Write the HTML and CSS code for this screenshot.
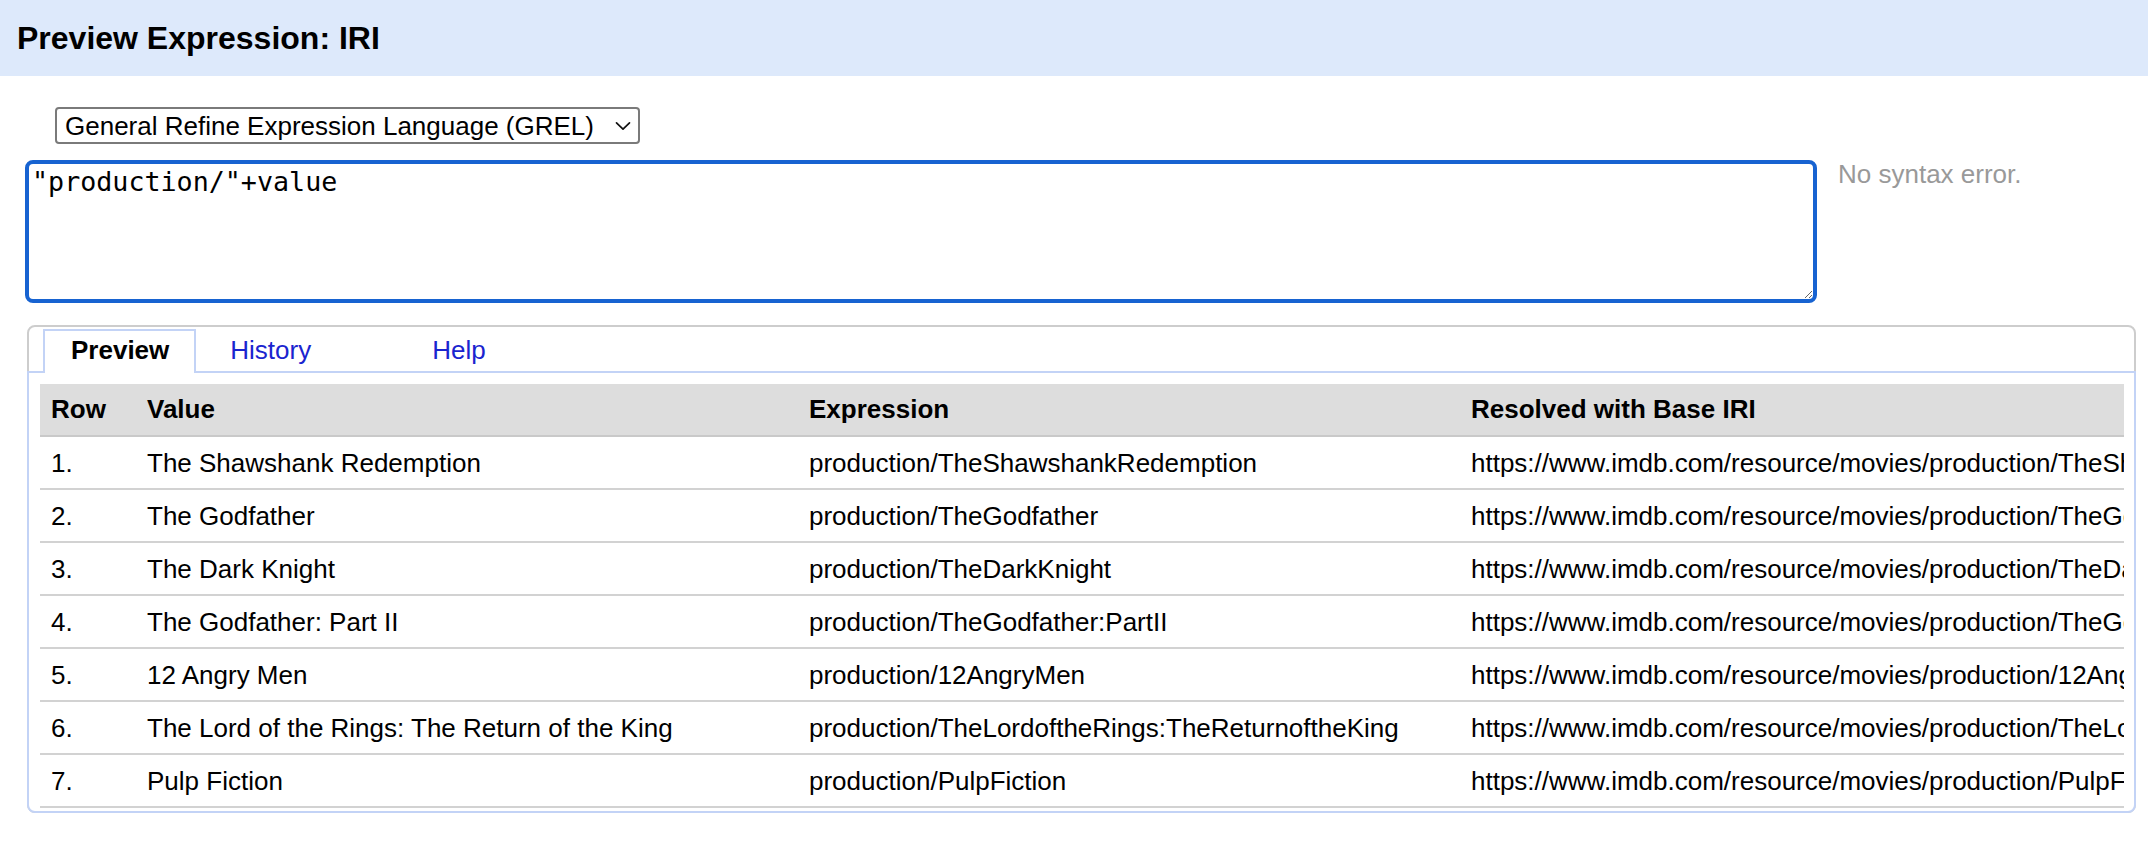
FILE: index.html
```html
<!DOCTYPE html>
<html lang="en">
<head>
<meta charset="utf-8">
<title>Preview Expression: IRI</title>
<link rel="stylesheet" href="styles.css">
</head>
<body>
<div class="dialog">
  <div class="dialog-header">
    <h1 class="dialog-title">Preview Expression: IRI</h1>
  </div>
  <div class="dialog-body">
    <div class="lang-row">
      <label class="select-box">
        <select class="lang-select">
          <option>General Refine Expression Language (GREL)</option>
        </select>
        <svg class="select-chevron" width="16" height="10" viewBox="0 0 16 10" aria-hidden="true"><path d="M1.5 1.8 L8 8.2 L14.5 1.8" fill="none" stroke="#111" stroke-width="1.7" stroke-linecap="round" stroke-linejoin="round"/></svg>
      </label>
    </div>
    <div class="expr-row">
      <textarea class="expr-input" spellcheck="false">"production/"+value</textarea>
      <div class="expr-status">No syntax error.</div>
    </div>
    <div class="tabs">
      <div class="tab-nav">
        <div class="tab tab-active">Preview</div>
        <div class="tab tab-history">History</div>
        <div class="tab tab-help">Help</div>
      </div>
      <div class="tab-panel">
        <div class="table-wrap">
          <table class="preview-table">
            <colgroup>
              <col class="col-row">
              <col class="col-value">
              <col class="col-expr">
              <col class="col-iri">
            </colgroup>
            <thead>
              <tr><th>Row</th><th>Value</th><th>Expression</th><th>Resolved with Base IRI</th></tr>
            </thead>
            <tbody>
              <tr><td>1.</td><td>The Shawshank Redemption</td><td>production/TheShawshankRedemption</td><td>https://www.imdb.com/resource/movies/production/TheShawshankRedemption</td></tr>
              <tr><td>2.</td><td>The Godfather</td><td>production/TheGodfather</td><td>https://www.imdb.com/resource/movies/production/TheGodfather</td></tr>
              <tr><td>3.</td><td>The Dark Knight</td><td>production/TheDarkKnight</td><td>https://www.imdb.com/resource/movies/production/TheDarkKnight</td></tr>
              <tr><td>4.</td><td>The Godfather: Part II</td><td>production/TheGodfather:PartII</td><td>https://www.imdb.com/resource/movies/production/TheGodfather:PartII</td></tr>
              <tr><td>5.</td><td>12 Angry Men</td><td>production/12AngryMen</td><td>https://www.imdb.com/resource/movies/production/12AngryMen</td></tr>
              <tr><td>6.</td><td>The Lord of the Rings: The Return of the King</td><td>production/TheLordoftheRings:TheReturnoftheKing</td><td>https://www.imdb.com/resource/movies/production/TheLordoftheRings:TheReturnoftheKing</td></tr>
              <tr><td>7.</td><td>Pulp Fiction</td><td>production/PulpFiction</td><td>https://www.imdb.com/resource/movies/production/PulpFiction</td></tr>
            </tbody>
          </table>
        </div>
      </div>
    </div>
  </div>
</div>
</body>
</html>
```
FILE: styles.css
```css
* { box-sizing: border-box; }

html, body {
  margin: 0;
  padding: 0;
  background: #ffffff;
}

body {
  font-family: "Liberation Sans", Arial, Helvetica, sans-serif;
  font-size: 26px;
  line-height: 30px;
  color: #000;
  width: 2148px;
  overflow: hidden;
}

.dialog-header {
  background: #dde9fb;
  height: 76px;
  padding: 20px 17px;
}

.dialog-title {
  margin: 0;
  font-size: 32px;
  line-height: 36px;
  font-weight: bold;
  color: #000;
}

.dialog-body {
  padding: 31px 12px 0 27px;
}

.lang-row {
  display: flex;
  padding-left: 28px;
}

.select-box {
  display: inline-flex;
  align-items: center;
  justify-content: space-between;
  width: 585px;
  height: 37px;
  border: 2px solid #7a7a7a;
  border-radius: 4px;
  padding: 0 7px 0 8px;
  background: #fff;
}

.lang-select {
  appearance: none;
  -webkit-appearance: none;
  border: 0;
  outline: 0;
  background: transparent;
  margin: 0;
  padding: 0;
  font-family: "Liberation Sans", Arial, Helvetica, sans-serif;
  font-size: 26px;
  line-height: 30px;
  height: 30px;
  color: #000;
}

.select-chevron {
  flex: none;
}

.expr-row {
  display: flex;
  align-items: flex-start;
  margin-top: 16px;
}

.expr-input {
  display: block;
  width: 1792px;
  height: 143px;
  margin: 0 0 0 -2px;
  border: 4px solid #1763d1;
  border-radius: 8px;
  padding: 2px 3px;
  font-family: "DejaVu Sans Mono", "Liberation Mono", monospace;
  font-size: 26.7px;
  color: #000;
  outline: none;
  resize: both;
}

.expr-status {
  margin-left: 21px;
  margin-top: -1px;
  color: #999;
  font-size: 26px;
  line-height: 30px;
}

.tabs {
  margin-top: 22px;
  border: 2px solid #cdcdcd;
  border-radius: 8px;
}

.tab-nav {
  display: flex;
  padding: 2px 0 0 14px;
}

.tab {
  height: 42px;
  padding: 4px 25px 0 26px;
  border: 2px solid transparent;
  border-bottom: 0;
  color: #1a24cf;
  font-size: 26px;
  line-height: 30px;
  white-space: nowrap;
}

.tab-active {
  position: relative;
  z-index: 1;
  height: 44px;
  margin-bottom: -2px;
  background: #fff;
  border-color: #c3d3f6;
  color: #000;
  font-weight: bold;
}

.tab-history {
  margin-left: 6px;
}

.tab-help {
  margin-left: 66px;
}

.tab-panel {
  margin: 0 -2px -2px -2px;
  border: 2px solid #c3d3f6;
  border-radius: 0 0 8px 8px;
  padding: 11px 10px 3px 11px;
  background: #fff;
}

.table-wrap {
  overflow: hidden;
}

.preview-table {
  table-layout: fixed;
  border-collapse: collapse;
  width: 2600px;
}

.col-row { width: 96px; }
.col-value { width: 662px; }
.col-expr { width: 662px; }
.col-iri { width: 1180px; }

.preview-table th,
.preview-table td {
  text-align: left;
  white-space: nowrap;
  overflow: hidden;
  font-size: 26px;
  line-height: 30px;
  color: #000;
}

.preview-table th {
  background: #dddddd;
  font-weight: bold;
  padding: 10px 11px 11px 11px;
  border-bottom: 2px solid #c9c9c9;
}

.preview-table td {
  padding: 11px 11px 10px 11px;
  border-bottom: 2px solid #d2d2d2;
}
```
